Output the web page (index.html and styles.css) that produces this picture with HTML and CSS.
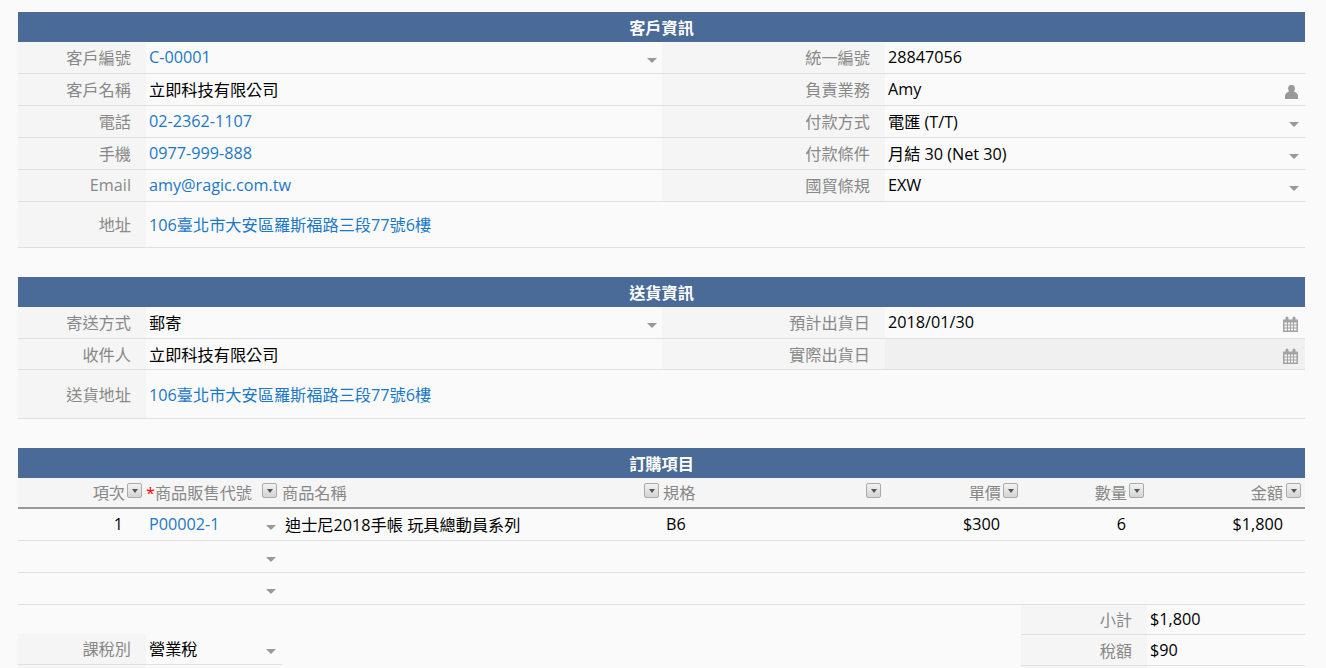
FILE: index.html
```html
<!DOCTYPE html>
<html lang="zh-Hant">
<head>
<meta charset="utf-8">
<title>訂單</title>
<link rel="stylesheet" href="styles.css">
</head>
<body>
<svg class="defs" width="0" height="0" aria-hidden="true">
  <symbol id="cal" viewBox="0 0 15 16">
    <path d="M2.500 2a1.500 1.500 0 0 1 3 0v1.500h4V2a1.500 1.500 0 0 1 3 0v1.500H15V16H0V3.500h2.500z" fill="#a3a3a3"/>
    <path d="M1.500 6.500h2.500v2H1.500zM5 6.500h2v2H5zM8 6.500h2v2H8zM11 6.500h2.500v2H11zM1.500 9.500h2.500v2H1.500zM5 9.500h2v2H5zM8 9.500h2v2H8zM11 9.500h2.500v2H11zM1.500 12.500h2.500v2H1.500zM5 12.500h2v2H5zM8 12.500h2v2H8zM11 12.500h2.500v2H11z" fill="#f4f4f4"/>
  </symbol>
  <symbol id="user" viewBox="0 0 13 14">
    <circle cx="6.500" cy="3.500" r="3.400" fill="#999"/>
    <path d="M0 14v-3C0 8.500 2.500 7.200 4.500 6h4c2 1.200 4.500 2.500 4.500 5v3z" fill="#999"/>
  </symbol>
</svg>

<section class="block">
  <h2 class="bar">客戶資訊</h2>
  <div class="form">
    <div class="lbl">客戶編號</div>
    <div class="val link">C-00001<i class="caret"></i></div>
    <div class="lbl">統一編號</div>
    <div class="val">28847056</div>

    <div class="lbl">客戶名稱</div>
    <div class="val">立即科技有限公司</div>
    <div class="lbl">負責業務</div>
    <div class="val">Amy<svg class="ico-user"><use href="#user"/></svg></div>

    <div class="lbl">電話</div>
    <div class="val link">02-2362-1107</div>
    <div class="lbl">付款方式</div>
    <div class="val">電匯 (T/T)<i class="caret"></i></div>

    <div class="lbl">手機</div>
    <div class="val link">0977-999-888</div>
    <div class="lbl">付款條件</div>
    <div class="val">月結 30 (Net 30)<i class="caret"></i></div>

    <div class="lbl">Email</div>
    <div class="val link">amy@ragic.com.tw</div>
    <div class="lbl">國貿條規</div>
    <div class="val">EXW<i class="caret"></i></div>

    <div class="lbl tall">地址</div>
    <div class="val link tall wide">106臺北市大安區羅斯福路三段77號6樓</div>
  </div>
</section>

<section class="block">
  <h2 class="bar">送貨資訊</h2>
  <div class="form">
    <div class="lbl">寄送方式</div>
    <div class="val">郵寄<i class="caret"></i></div>
    <div class="lbl">預計出貨日</div>
    <div class="val">2018/01/30<svg class="ico-cal"><use href="#cal"/></svg></div>

    <div class="lbl short">收件人</div>
    <div class="val short">立即科技有限公司</div>
    <div class="lbl short">實際出貨日</div>
    <div class="val short off"><span></span><svg class="ico-cal"><use href="#cal"/></svg></div>

    <div class="lbl tall2">送貨地址</div>
    <div class="val link tall2 wide">106臺北市大安區羅斯福路三段77號6樓</div>
  </div>
</section>

<section class="block">
  <h2 class="bar">訂購項目</h2>
  <div class="grid thead">
    <div class="th end">項次<b class="fbtn"></b></div>
    <div class="th between"><span><em class="req">*</em>商品販售代號</span><b class="fbtn"></b></div>
    <div class="th between name"><span>商品名稱</span><b class="fbtn"></b></div>
    <div class="th between spec"><span>規格</span><b class="fbtn"></b></div>
    <div class="th end">單價<b class="fbtn"></b></div>
    <div class="th end">數量<b class="fbtn"></b></div>
    <div class="th end">金額<b class="fbtn"></b></div>
  </div>
  <div class="grid trow">
    <div class="td num n1">1</div>
    <div class="td link code">P00002-1<i class="caret"></i></div>
    <div class="td item">迪士尼2018手帳 玩具總動員系列</div>
    <div class="td spec-val">B6</div>
    <div class="td num n2">$300</div>
    <div class="td num n2">6</div>
    <div class="td num">$1,800</div>
  </div>
  <div class="grid trow">
    <div class="td"></div><div class="td code"><i class="caret"></i></div><div class="td"></div><div class="td"></div><div class="td"></div><div class="td"></div><div class="td"></div>
  </div>
  <div class="grid trow">
    <div class="td"></div><div class="td code"><i class="caret"></i></div><div class="td"></div><div class="td"></div><div class="td"></div><div class="td"></div><div class="td"></div>
  </div>
  <div class="totals">
    <div class="tax">
      <div class="lbl s">課稅別</div>
      <div class="val s">營業稅<i class="caret"></i></div>
      <div class="lbl s"></div>
      <div class="val s"></div>
    </div>
    <div class="sum">
      <div class="lbl s2">小計</div>
      <div class="val s2">$1,800</div>
      <div class="lbl s s3">稅額</div>
      <div class="val s s3">$90</div>
      <div class="lbl s"></div>
      <div class="val s"></div>
    </div>
  </div>
</section>
</body>
</html>
```

FILE: styles.css
```css
html, body {
  margin: 0;
  height: 668px;
  overflow: hidden;
}
body {
  background: #fafafa;
  padding: 12px 21px 0 18px;
  box-sizing: border-box;
  font-family: "Open Sans", "Noto Sans CJK TC", sans-serif;
  font-size: 16.2px;
  color: #000;
}
.defs {
  position: absolute;
}
.block {
  margin-bottom: 29px;
}
.bar {
  margin: 0;
  height: 30px;
  line-height: 32px;
  background: #4a6a98;
  color: #fff;
  font-size: 16.2px;
  font-weight: 700;
  text-align: center;
}
.form {
  display: grid;
  grid-template-columns: 128px 516px 223px 420px;
}
.lbl, .val {
  display: flex;
  align-items: center;
  height: 32px;
  padding-bottom: 2px;
  box-sizing: border-box;
  border-bottom: 1px solid #e0e0e0;
}
.lbl {
  justify-content: flex-end;
  padding-right: 15px;
  background: #f5f5f5;
  color: #888;
}
.val {
  justify-content: space-between;
  padding-right: 6px;
  padding-left: 3px;
}
.form .val:nth-child(4n+2) {
  padding-right: 5px;
}
.link {
  color: #1a78c8;
}
.tall {
  height: 46px;
}
.short {
  height: 31px;
  padding-bottom: 0;
}
.tall2 {
  height: 49px;
  padding-bottom: 0;
}
.wide {
  grid-column: span 3;
}
.off {
  background: #f0f0f0;
}
.caret {
  flex: none;
  width: 0;
  height: 0;
  margin-top: 7px;
  margin-left: auto;
  border-style: solid;
  border-width: 5.5px 5.5px 0;
  border-color: #999 transparent transparent;
}
.ico-user {
  flex: none;
  width: 13px;
  height: 14px;
  margin-top: 6px;
  margin-right: 1px;
}
.ico-cal {
  flex: none;
  width: 15px;
  height: 16px;
  margin-top: 3px;
  margin-right: 1px;
}
.val:not(.short) > .ico-cal {
  margin-top: 5px;
}
.grid {
  display: grid;
  grid-template-columns: 128px 136px 380px 223px 136px 126px 158px;
}
.thead {
  height: 31px;
  box-sizing: border-box;
  background: #f5f5f5;
  border-bottom: 2px solid #999;
}
.th {
  display: flex;
  align-items: center;
  color: #888;
  height: 27px;
}
.th.end {
  justify-content: flex-end;
  gap: 2px;
  padding-right: 3px;
}
.th:first-child {
  padding-right: 4px;
}
.th:last-child {
  padding-right: 4px;
  gap: 3px;
}
.between {
  justify-content: space-between;
}
.name {
  padding-right: 3px;
}
.th.between:nth-child(2) {
  padding-right: 5px;
}
.spec {
  padding-left: 1px;
  padding-right: 4px;
}
.req {
  color: #f00;
  font-style: normal;
}
.fbtn {
  flex: none;
  position: relative;
  width: 15px;
  height: 15px;
  box-sizing: border-box;
  margin-top: -2px;
  border: 1px solid #aaa;
  border-radius: 2px;
  background: linear-gradient(#f2f2f2, #d4d4d4);
}
.fbtn::after {
  content: "";
  position: absolute;
  left: 3.5px;
  top: 5px;
  border-style: solid;
  border-width: 4px 3px 0;
  border-color: #555 transparent transparent;
}
.trow {
  height: 32px;
  box-sizing: border-box;
  border-bottom: 1px solid #e0e0e0;
}
.td {
  display: flex;
  align-items: center;
  height: 29px;
}
.num {
  justify-content: flex-end;
  padding-right: 22px;
}
.n1 {
  padding-right: 23px;
}
.n2 {
  padding-right: 21px;
}
.code {
  justify-content: space-between;
  padding: 0 6px 0 3px;
}
.item {
  padding-left: 3px;
}
.spec-val {
  padding-left: 4px;
}
.totals {
  display: flex;
  justify-content: space-between;
}
.tax, .sum {
  display: grid;
  grid-auto-rows: min-content;
}
.tax {
  grid-template-columns: 128px 136px;
  padding-top: 29px;
}
.sum {
  grid-template-columns: 126px 158px;
}
.s {
  height: 31px;
}
.s2 {
  height: 30px;
}
.s3 {
  padding-bottom: 0;
}
```
